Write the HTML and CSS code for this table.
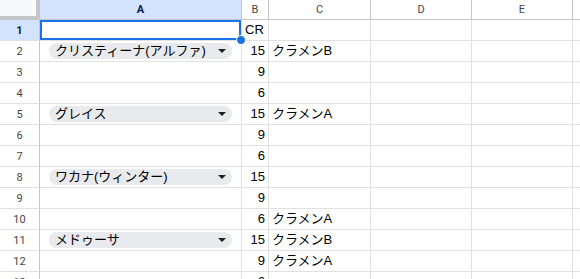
FILE: index.html
```html
<!DOCTYPE html>
<html lang="ja">
<head>
<meta charset="utf-8">
<link rel="stylesheet" href="styles.css">
</head>
<body>
<div class="sheet">
  <div class="corner"></div>
  <div class="colhead sel">A</div>
  <div class="colhead">B</div>
  <div class="colhead">C</div>
  <div class="colhead">D</div>
  <div class="colhead">E</div>
  <div class="colhead"></div>

  <div class="rowhead sel">1</div>
  <div class="cell active"><span class="handle"></span></div>
  <div class="cell">CR</div>
  <div class="cell"></div><div class="cell"></div><div class="cell"></div><div class="cell"></div>

  <div class="rowhead">2</div>
  <div class="cell chipcell"><div class="chip"><span class="chiptext">クリスティーナ(アルファ)</span><span class="tri"></span></div></div>
  <div class="cell num">15</div>
  <div class="cell">クラメンB</div>
  <div class="cell"></div><div class="cell"></div><div class="cell"></div>

  <div class="rowhead">3</div>
  <div class="cell"></div>
  <div class="cell num">9</div>
  <div class="cell"></div><div class="cell"></div><div class="cell"></div><div class="cell"></div>

  <div class="rowhead">4</div>
  <div class="cell"></div>
  <div class="cell num">6</div>
  <div class="cell"></div><div class="cell"></div><div class="cell"></div><div class="cell"></div>

  <div class="rowhead">5</div>
  <div class="cell chipcell"><div class="chip"><span class="chiptext">グレイス</span><span class="tri"></span></div></div>
  <div class="cell num">15</div>
  <div class="cell">クラメンA</div>
  <div class="cell"></div><div class="cell"></div><div class="cell"></div>

  <div class="rowhead">6</div>
  <div class="cell"></div>
  <div class="cell num">9</div>
  <div class="cell"></div><div class="cell"></div><div class="cell"></div><div class="cell"></div>

  <div class="rowhead">7</div>
  <div class="cell"></div>
  <div class="cell num">6</div>
  <div class="cell"></div><div class="cell"></div><div class="cell"></div><div class="cell"></div>

  <div class="rowhead">8</div>
  <div class="cell chipcell"><div class="chip"><span class="chiptext">ワカナ(ウィンター)</span><span class="tri"></span></div></div>
  <div class="cell num">15</div>
  <div class="cell"></div><div class="cell"></div><div class="cell"></div><div class="cell"></div>

  <div class="rowhead">9</div>
  <div class="cell"></div>
  <div class="cell num">9</div>
  <div class="cell"></div><div class="cell"></div><div class="cell"></div><div class="cell"></div>

  <div class="rowhead">10</div>
  <div class="cell"></div>
  <div class="cell num">6</div>
  <div class="cell">クラメンA</div>
  <div class="cell"></div><div class="cell"></div><div class="cell"></div>

  <div class="rowhead">11</div>
  <div class="cell chipcell"><div class="chip"><span class="chiptext">メドゥーサ</span><span class="tri"></span></div></div>
  <div class="cell num">15</div>
  <div class="cell">クラメンB</div>
  <div class="cell"></div><div class="cell"></div><div class="cell"></div>

  <div class="rowhead">12</div>
  <div class="cell"></div>
  <div class="cell num">9</div>
  <div class="cell">クラメンA</div>
  <div class="cell"></div><div class="cell"></div><div class="cell"></div>

  <div class="rowhead">13</div>
  <div class="cell"></div>
  <div class="cell num">6</div>
  <div class="cell"></div><div class="cell"></div><div class="cell"></div><div class="cell"></div>
</div>
</body>
</html>
```

FILE: styles.css
```css
html, body {
  margin: 0;
  padding: 0;
  background: #ffffff;
  overflow: hidden;
}

.sheet {
  display: grid;
  grid-template-columns: 40px 202px 27px 102px 101px 101px 101px;
  grid-template-rows: 20px repeat(13, 21px);
  width: 674px;
  font-family: "Liberation Sans", Arial, "Noto Sans CJK JP", sans-serif;
  font-size: 13px;
  color: #000;
}

.sheet > div {
  box-sizing: border-box;
}

.corner {
  background: #f8f9fa;
  border-right: 4px solid #c4c7c5;
  border-bottom: 4px solid #c4c7c5;
}

.colhead {
  display: flex;
  align-items: center;
  justify-content: center;
  font-family: Roboto, "Liberation Sans", sans-serif;
  font-size: 11px;
  color: #444746;
  background: #ffffff;
  border-right: 1px solid #c4c7c5;
  border-bottom: 1px solid #c4c7c5;
}

.rowhead {
  display: flex;
  align-items: center;
  justify-content: center;
  font-family: Roboto, "Liberation Sans", sans-serif;
  font-size: 11px;
  color: #444746;
  background: #ffffff;
  border-right: 1px solid #c4c7c5;
  border-bottom: 1px solid #e1e1e1;
}

.colhead.sel,
.rowhead.sel {
  background: #d3e3fd;
  color: #041e49;
  font-weight: bold;
}

.cell {
  display: flex;
  align-items: center;
  padding: 0 3px;
  line-height: 20px;
  white-space: nowrap;
  border-right: 1px solid #e1e1e1;
  border-bottom: 1px solid #e1e1e1;
}

.cell.num {
  justify-content: flex-end;
}

.cell.active {
  position: relative;
}

.cell.active::after {
  content: "";
  position: absolute;
  left: 0;
  top: 0;
  right: 0;
  bottom: 0;
  border: 2px solid #1a73e8;
}

.handle {
  position: absolute;
  right: -5px;
  bottom: -5px;
  width: 8px;
  height: 8px;
  border-radius: 50%;
  background: #1a73e8;
  border: 1px solid #ffffff;
  z-index: 2;
}

.chipcell {
  padding: 0 9px 0 9px;
}

.chip {
  flex: 1;
  display: flex;
  align-items: center;
  justify-content: space-between;
  height: 16px;
  padding: 0 6px 0 6px;
  border-radius: 8px;
  background: #e8eaed;
  font-family: "Liberation Sans", Arial, "Noto Sans CJK JP", sans-serif;
  font-size: 13px;
  line-height: 16px;
  color: #000;
}

.tri {
  width: 0;
  height: 0;
  border-left: 4px solid transparent;
  border-right: 4px solid transparent;
  border-top: 4px solid #1f1f1f;
}
```
